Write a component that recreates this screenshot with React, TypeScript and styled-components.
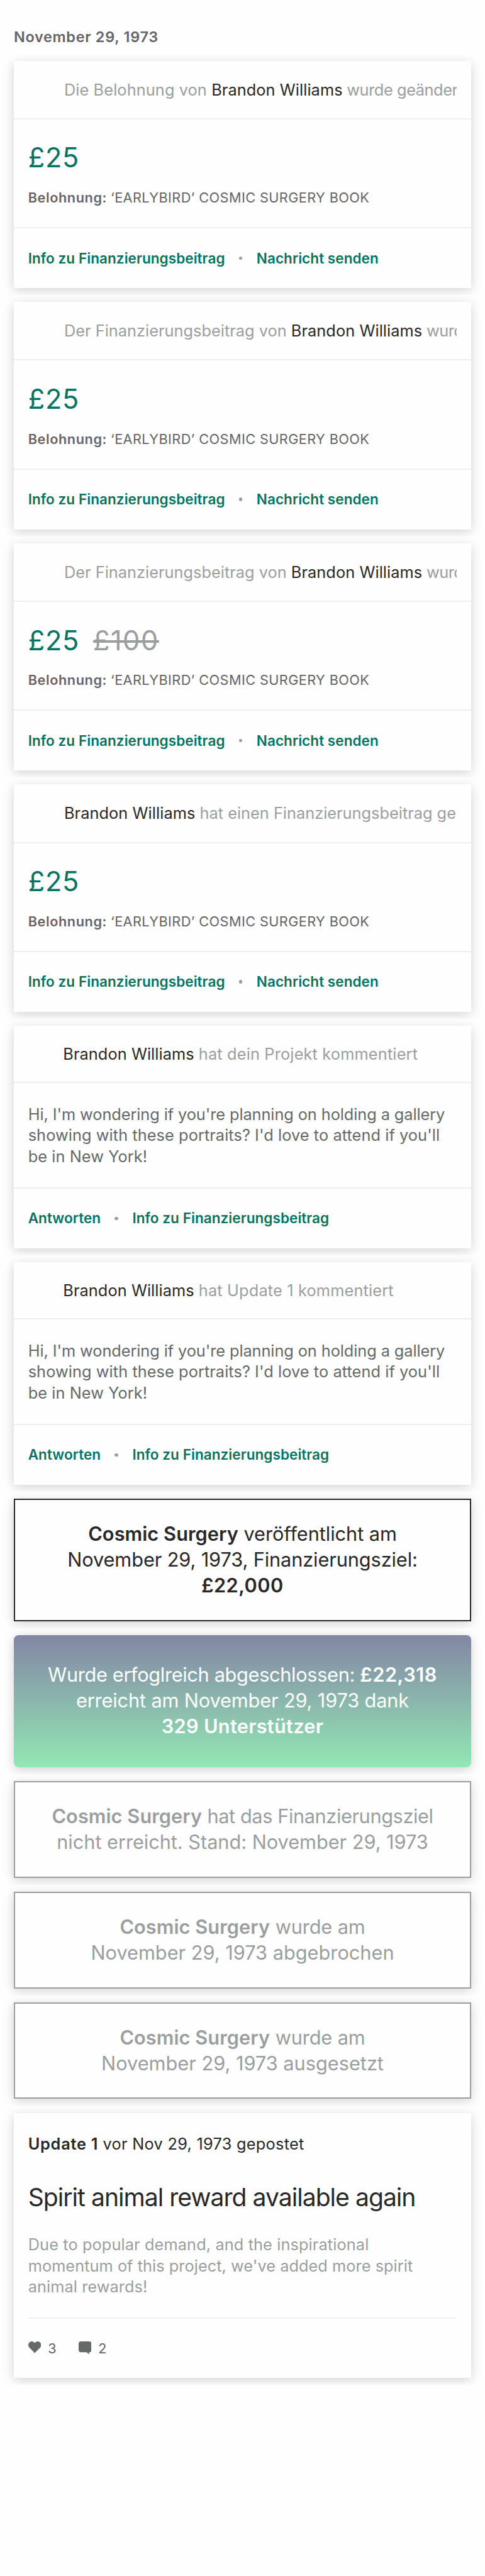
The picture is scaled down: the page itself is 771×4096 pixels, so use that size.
import React from 'react';
import styled, { createGlobalStyle, css } from 'styled-components';

/* Design units are @2x points; the feed is drawn at this ratio. */
const u = (n: number) => `${(n * 0.931).toFixed(3)}px`;

const color = {
  page: '#fefefe',
  green: '#037362',
  black: '#282828',
  grey: '#9b9e9e',
  darkGrey: '#656969',
  slate: '#656468',
  line: '#eeeef3',
};

const GlobalStyle = createGlobalStyle`
  * { box-sizing: border-box; }
  body {
    margin: 0;
    background: ${color.page};
    font-family: Inter, "Liberation Sans", sans-serif;
    -webkit-font-smoothing: antialiased;
  }
`;

const Feed = styled.main`
  width: 771px;
  height: 4096px;
  overflow: hidden;
  background: ${color.page};
`;

const DateHeader = styled.h2`
  height: ${u(92)};
  margin: 0;
  padding: ${u(48.8)} ${u(23.5)} 0;
  font-size: ${u(25.2)};
  line-height: ${u(30)};
  font-weight: 600;
  letter-spacing: 0.0298em;
  color: ${color.slate};
`;

const Cell = styled.div`
  padding: ${u(12)} ${u(24)};
  overflow: hidden;
`;

const shadow = css`
  box-shadow: 0 ${u(4)} ${u(18)} rgba(0, 0, 0, 0.18);
`;

const Card = styled.article`
  background: ${color.page};
  ${shadow}
`;

const CardHeader = styled.header<{ $comment?: boolean }>`
  display: flex;
  align-items: center;
  height: ${(p) => u(p.$comment ? 98 : 100)};
  padding-left: ${(p) => u(p.$comment ? 83.7 : 85.5)};
  padding-right: ${u(24)};
  border-bottom: 2px solid ${color.line};
`;

const HeaderText = styled.div`
  flex: 1;
  overflow: hidden;
  white-space: nowrap;
  font-size: ${u(27.2)};
  line-height: ${u(36)};
  color: ${color.grey};
`;

const T = styled.span<{ $ls?: number }>`
  letter-spacing: ${(p) => p.$ls ?? 0}em;
`;

const Name = styled(T)`
  color: ${color.black};
`;

const Strong = styled(T)`
  font-weight: 600;
`;

const PledgeBody = styled.section`
  height: ${u(186)};
  padding: ${u(36)} ${u(24)} 0;
  border-bottom: 2px solid ${color.line};
`;

const Amounts = styled.div`
  display: flex;
  gap: ${u(23.5)};
  margin-bottom: ${u(25.5)};
  font-size: ${u(46.5)};
  line-height: ${u(58)};
`;

const Amount = styled.span`
  color: ${color.green};
  letter-spacing: 0.018em;
`;

const OldAmount = styled.span`
  color: ${color.grey};
  letter-spacing: 0.035em;
  text-decoration: line-through;
  text-decoration-thickness: ${u(4)};
`;

const Reward = styled.p`
  margin: 0;
  font-size: ${u(23.3)};
  line-height: ${u(28)};
  color: ${color.slate};
  white-space: nowrap;
`;

const Footer = styled.footer`
  display: flex;
  align-items: center;
  gap: ${u(24)};
  height: ${u(102)};
  padding: 0 ${u(24)};
`;

const Action = styled.a`
  font-size: ${u(24.2)};
  line-height: ${u(30)};
  font-weight: 600;
  letter-spacing: 0.0025em;
  color: ${color.green};
`;

const Dot = styled.i`
  width: ${u(6)};
  height: ${u(6)};
  border-radius: 50%;
  background: ${color.grey};
`;

const CommentBody = styled.section`
  height: ${u(180)};
  padding: ${u(35)} ${u(24)} 0;
  border-bottom: 2px solid ${color.line};
`;

const Line = styled.div<{ $ls?: number }>`
  letter-spacing: ${(p) => p.$ls ?? 0}em;
  white-space: nowrap;
`;

const Paragraph = styled.div<{ $muted?: boolean }>`
  font-size: ${u(27.2)};
  line-height: ${u(36)};
  color: ${(p) => (p.$muted ? color.grey : color.darkGrey)};
`;

const Banner = styled.article<{ $tone: 'dark' | 'grey' | 'success' }>`
  display: flex;
  flex-direction: column;
  justify-content: center;
  text-align: center;
  font-size: ${u(33)};
  line-height: ${u(44)};
  ${shadow}
  ${(p) =>
    p.$tone === 'success'
      ? css`
          height: ${u(225)};
          border-radius: ${u(8)};
          color: #fff;
          background: linear-gradient(#8386a4, #92e7b4);
        `
      : css`
          height: ${u(p.$tone === 'dark' ? 209 : 165)};
          color: ${p.$tone === 'dark' ? color.black : color.grey};
          border: 2px solid currentColor;
          background: ${color.page};
        `}
`;

const UpdateCard = styled(Card)`
  height: ${u(452)};
  padding: ${u(35)} ${u(24)} 0;
`;

const Posted = styled.div`
  font-size: ${u(27.2)};
  line-height: ${u(36)};
  color: ${color.black};
  margin-bottom: ${u(47.5)};
`;

const Title = styled.h3`
  margin: 0 0 ${u(36)};
  font-size: ${u(42)};
  line-height: ${u(52)};
  font-weight: 400;
  letter-spacing: -0.025em;
  white-space: nowrap;
  color: ${color.black};
`;

const Stats = styled.div`
  display: flex;
  align-items: center;
  gap: ${u(37.5)};
  height: ${u(103)};
  margin-top: ${u(34.5)};
  border-top: 2px solid ${color.line};
`;

const Stat = styled.span`
  display: flex;
  align-items: center;
  gap: ${u(12)};
  font-size: ${u(23.3)};
  line-height: ${u(28)};
  color: ${color.slate};

  svg {
    display: block;
    width: ${u(22)};
    height: ${u(22)};
    fill: ${color.darkGrey};
  }
`;

const Heart = () => (
  <svg viewBox="0 0 22 22">
    <path d="M11 20 1.800 10.500C-.6 8-.6 4.200 1.800 1.800 4.200-.6 8.600-.6 11 2.800 13.400-.6 17.800-.6 20.200 1.800c2.400 2.400 2.400 6.200 0 8.700z" />
  </svg>
);

const Bubble = () => (
  <svg viewBox="0 0 22 22">
    <path d="M4 0h14a4 4 0 0 1 4 4v10.500a4 4 0 0 1-4 4V22l-4.500-3.500H4a4 4 0 0 1-4-4V4a4 4 0 0 1 4-4z" />
  </svg>
);

const Brandon = () => <Name $ls={0.003}>Brandon Williams</Name>;

function PledgeCard({ header, old }: { header: React.ReactNode; old?: string }) {
  return (
    <Cell>
      <Card>
        <CardHeader>
          <HeaderText>{header}</HeaderText>
        </CardHeader>
        <PledgeBody>
          <Amounts>
            <Amount>£25</Amount>
            {old && <OldAmount>{old}</OldAmount>}
          </Amounts>
          <Reward>
            <Strong $ls={0.0265}>Belohnung: </Strong>
            <T $ls={0.0192}>‘EARLYBIRD’ COSMIC SURGERY BOOK</T>
          </Reward>
        </PledgeBody>
        <Footer>
          <Action>Info zu Finanzierungsbeitrag</Action>
          <Dot />
          <Action>Nachricht senden</Action>
        </Footer>
      </Card>
    </Cell>
  );
}

function CommentCard({ header }: { header: string }) {
  return (
    <Cell>
      <Card>
        <CardHeader $comment>
          <HeaderText>
            <Brandon /> <T $ls={0.0066}>{header}</T>
          </HeaderText>
        </CardHeader>
        <CommentBody>
          <Paragraph>
            <Line $ls={-0.003}>Hi, I'm wondering if you're planning on holding a gallery</Line>
            <Line $ls={0.003}>showing with these portraits? I'd love to attend if you'll</Line>
            <Line $ls={0.003}>be in New York!</Line>
          </Paragraph>
        </CommentBody>
        <Footer>
          <Action>Antworten</Action>
          <Dot />
          <Action>Info zu Finanzierungsbeitrag</Action>
        </Footer>
      </Card>
    </Cell>
  );
}

const Project = () => <Strong $ls={0.0017}>Cosmic Surgery</Strong>;

const PledgeChanged = () => (
  <>
    <T $ls={0.001}>Der Finanzierungsbeitrag von </T>
    <Brandon />
    <T $ls={-0.018}> wurd</T>
  </>
);

export default function App() {
  return (
    <>
      <GlobalStyle />
      <Feed>
        <DateHeader>November 29, 1973</DateHeader>
        <PledgeCard
          header={
            <>
              <T $ls={0.004}>Die Belohnung von </T>
              <Brandon />
              <T $ls={-0.016}> wurde geänder</T>
            </>
          }
        />
        <PledgeCard header={<PledgeChanged />} />
        <PledgeCard old="£100" header={<PledgeChanged />} />
        <PledgeCard
          header={
            <>
              <Brandon />
              <T $ls={0.0005}> hat einen Finanzierungsbeitrag ge</T>
            </>
          }
        />
        <CommentCard header="hat dein Projekt kommentiert" />
        <CommentCard header="hat Update 1 kommentiert" />

        <Cell>
          <Banner $tone="dark">
            <Line $ls={-0.0018}>
              <Project /> veröffentlicht am
            </Line>
            <Line $ls={-0.0035}>November 29, 1973, Finanzierungsziel:</Line>
            <Line>
              <Strong $ls={0.0157}>£22,000</Strong>
            </Line>
          </Banner>
        </Cell>
        <Cell>
          <Banner $tone="success">
            <Line $ls={-0.0108}>
              Wurde erfoglreich abgeschlossen: <Strong $ls={0.018}>£22,318</Strong>
            </Line>
            <Line $ls={-0.0046}>erreicht am November 29, 1973 dank</Line>
            <Line>
              <Strong $ls={0.0094}>329 Unterstützer</Strong>
            </Line>
          </Banner>
        </Cell>
        <Cell>
          <Banner $tone="grey">
            <Line $ls={-0.013}>
              <Project /> hat das Finanzierungsziel
            </Line>
            <Line $ls={-0.0011}>nicht erreicht. Stand: November 29, 1973</Line>
          </Banner>
        </Cell>
        <Cell>
          <Banner $tone="grey">
            <Line $ls={-0.004}>
              <Project /> wurde am
            </Line>
            <Line>November 29, 1973 abgebrochen</Line>
          </Banner>
        </Cell>
        <Cell>
          <Banner $tone="grey">
            <Line $ls={-0.004}>
              <Project /> wurde am
            </Line>
            <Line>November 29, 1973 ausgesetzt</Line>
          </Banner>
        </Cell>

        <Cell>
          <UpdateCard>
            <Posted>
              <Strong $ls={0.0298}>Update 1</Strong>
              <T $ls={0.0108}> vor Nov 29, 1973 gepostet</T>
            </Posted>
            <Title>Spirit animal reward available again</Title>
            <Paragraph $muted>
              <Line $ls={0.0045}>Due to popular demand, and the inspirational</Line>
              <Line $ls={0.0019}>momentum of this project, we've added more spirit</Line>
              <Line $ls={0.003}>animal rewards!</Line>
            </Paragraph>
            <Stats>
              <Stat>
                <Heart />3
              </Stat>
              <Stat>
                <Bubble />2
              </Stat>
            </Stats>
          </UpdateCard>
        </Cell>
      </Feed>
    </>
  );
}
